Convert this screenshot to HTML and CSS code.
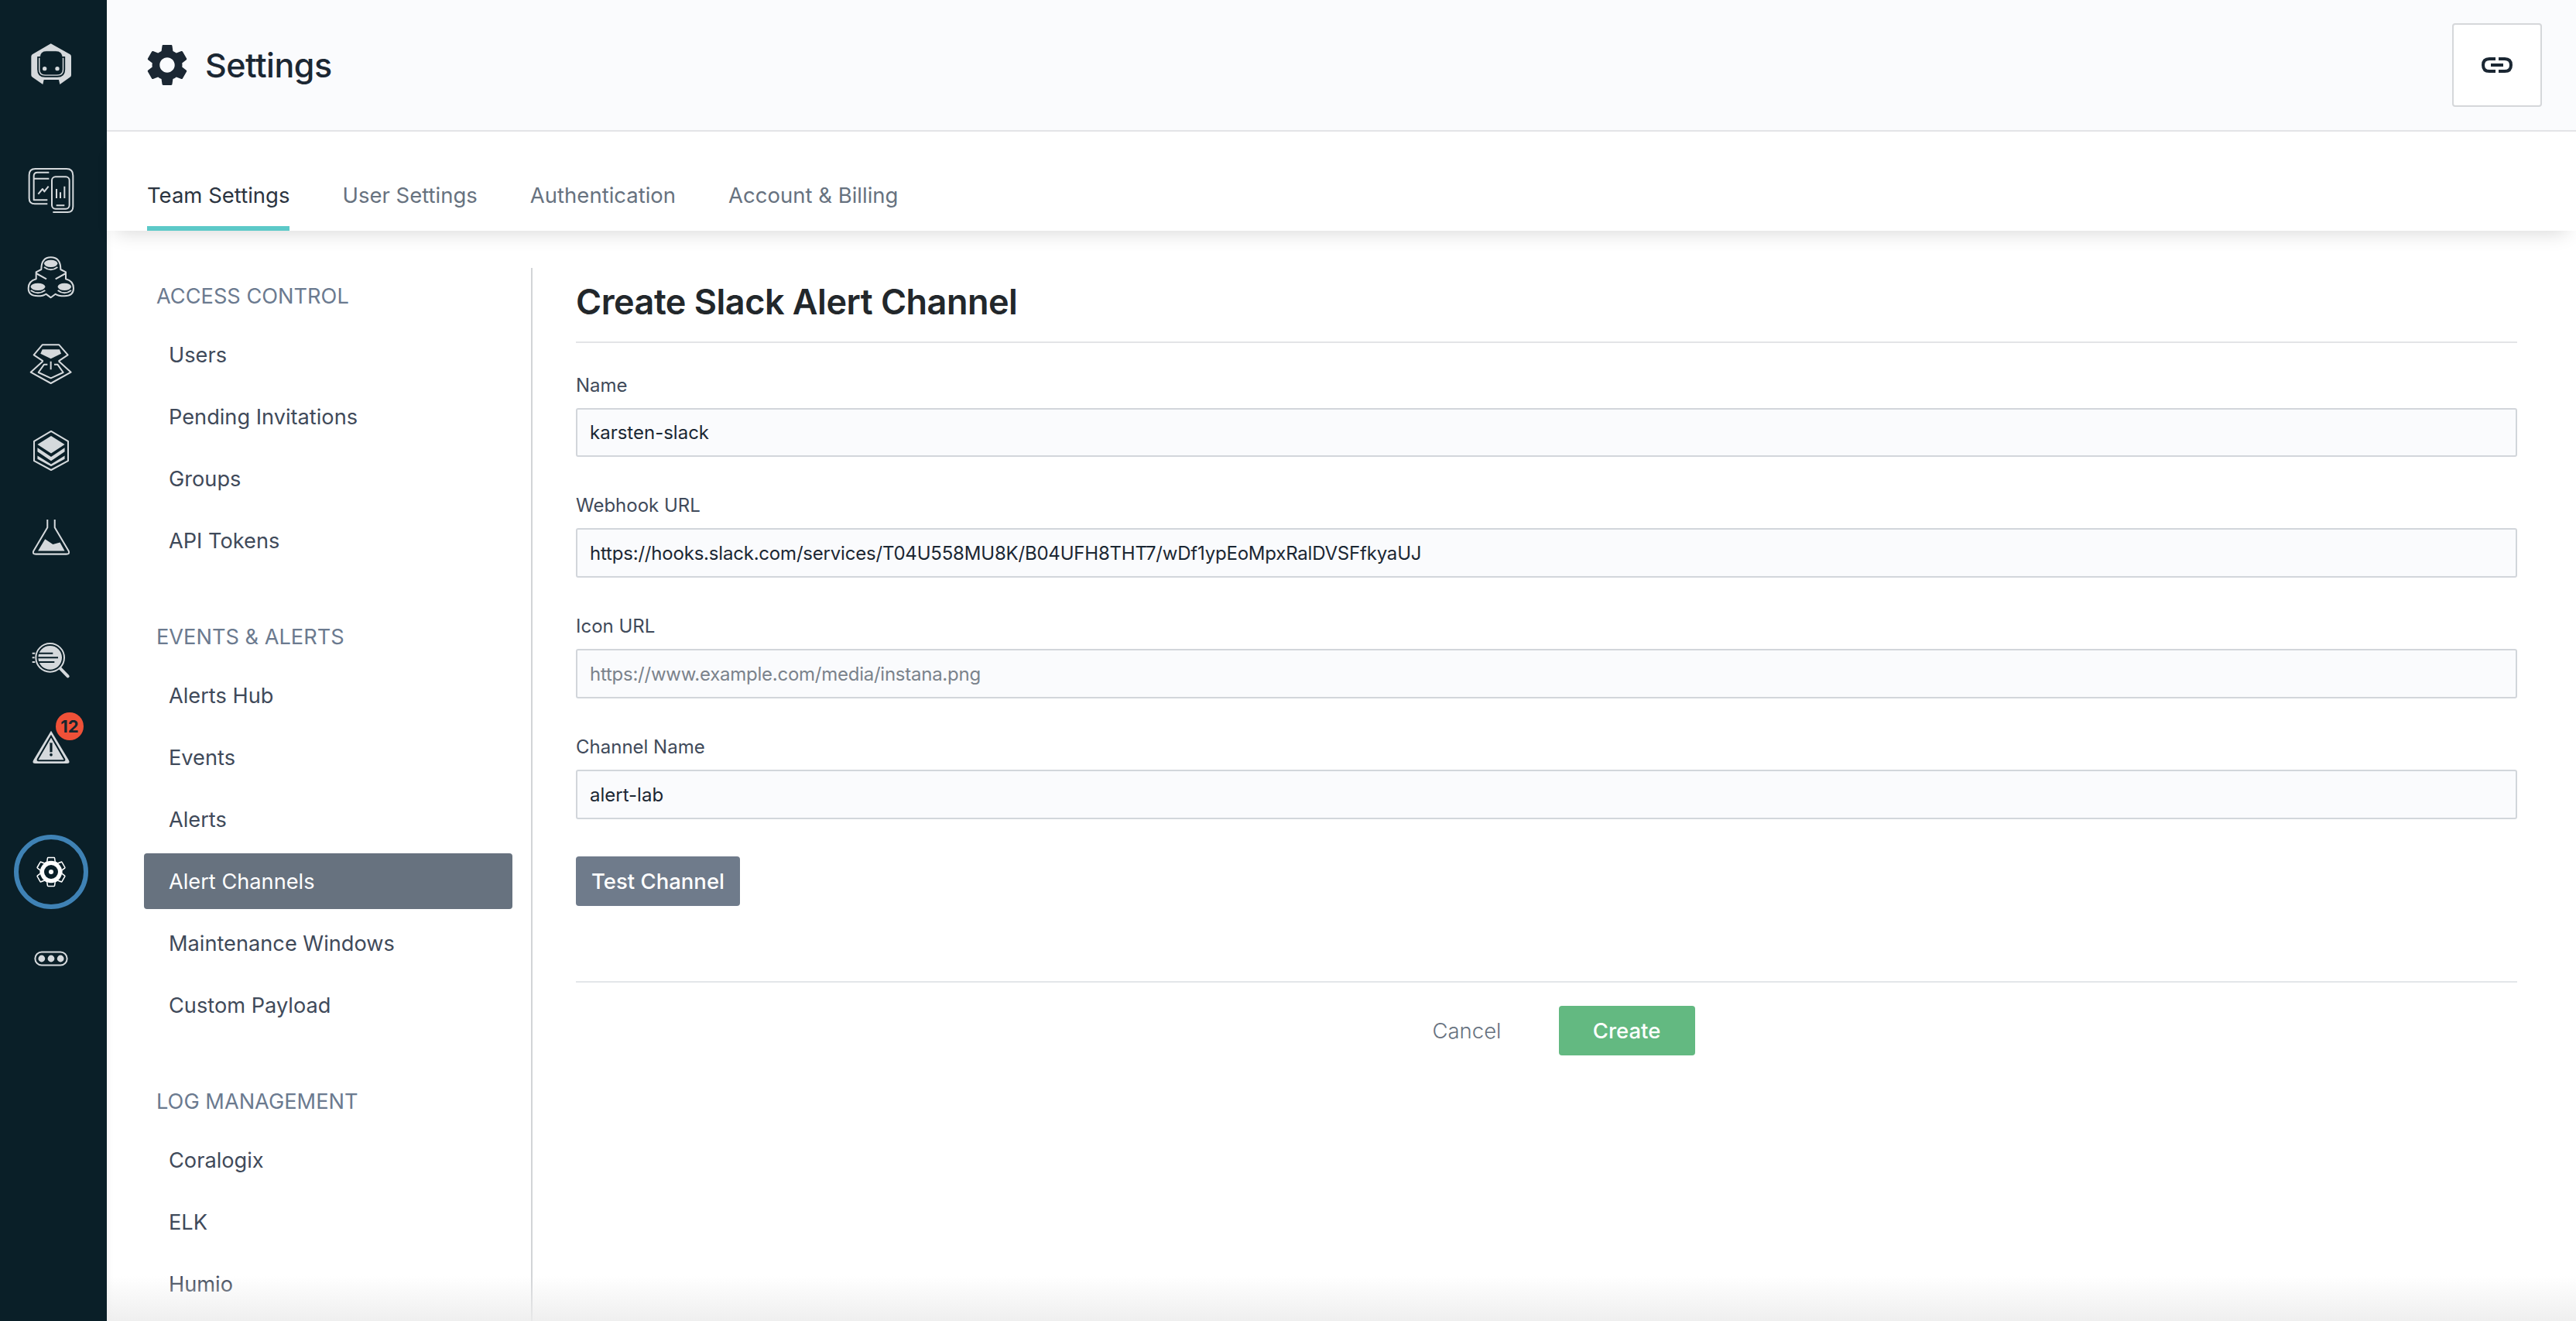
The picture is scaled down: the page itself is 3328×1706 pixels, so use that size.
FILE: index.html
```html
<!DOCTYPE html>
<html lang="en">
<head>
    <meta charset="UTF-8">
    <title>Settings</title>
    <link rel="stylesheet" href="styles.css">
</head>
<body>
<div class="app">
    <aside class="rail">
        <div class="rail-logo">
            <svg width="54" height="56" viewBox="117 166 162 168">
                <path class="solid" d="M197 170L272 212Q276 215 276 220V292Q276 298 270 301L232 328L228 310H170L166 328L127 301Q121 298 121 292V220Q121 215 125 212Z"/>
                <path class="cut" d="M147 220V270Q147 298 175 298H222Q250 298 250 270V220" fill="none" stroke-width="5"/>
                <path class="solid" d="M150 225V270Q150 294 175 294H222Q247 294 247 270V225Z"/>
                <path class="cut" d="M155 228Q155 200 180 200H216Q242 200 242 228V270Q242 290 220 290H177Q155 290 155 270Z"/>
                <circle class="solid" cx="173" cy="267" r="8"/>
                <circle class="solid" cx="222" cy="267" r="8"/>
            </svg>
        </div>
        <div class="rail-group">
            <div class="rail-slot">
                <svg width="62" height="62" viewBox="105 645 186 186">
                    <path class="line" d="M205 822H262Q283 822 283 800V680Q283 654 258 654H137Q113 654 113 678V768Q113 790 135 790H184"/>
                    <path class="line" d="M190 668H145Q131 668 131 682V775H184M131 692H190M148 752L165 732L172 742L188 722"/>
                    <rect class="line" x="201" y="685" width="68" height="124" rx="14"/>
                    <path class="line" d="M219 732V768M234 745V768M250 722V768M218 796H250"/>
                </svg>
            </div>
            <div class="rail-slot">
                <svg width="62" height="58" viewBox="105 982 186 166">
                    <path class="line" d="M160 1035Q160 988 197 988Q235 988 235 1035L255 1045V1072Q285 1080 285 1108Q285 1138 250 1138Q225 1138 215 1130L197 1144L178 1130Q168 1138 147 1138Q110 1138 110 1108Q110 1080 140 1072V1045Z"/>
                    <ellipse class="solid" cx="197" cy="1012" rx="26" ry="14"/>
                    <path class="line" d="M171 1026Q197 1046 223 1026M140 1050L180 1072M255 1050L215 1072"/>
                    <ellipse class="solid" cx="147" cy="1102" rx="28" ry="14"/>
                    <path class="line" d="M119 1116Q147 1136 175 1116"/>
                    <ellipse class="solid" cx="250" cy="1102" rx="26" ry="14"/>
                    <path class="line" d="M224 1116Q250 1136 276 1116"/>
                </svg>
            </div>
            <div class="rail-slot">
                <svg width="58" height="54" viewBox="112 130 174 160">
                    <path class="line" d="M168 199L132 175L165 136H230L264 175L228 199M168 199L120 242L198 285L276 242L228 199"/>
                    <path class="solid" d="M165 154H232L238 170L198 190L158 170Z"/>
                    <path class="line" d="M185 212H172L150 243L198 265L246 243L224 212H211M198 200V232"/>
                </svg>
            </div>
            <div class="rail-slot">
                <svg width="48" height="54" viewBox="127 467 142 158">
                    <path class="line" d="M198 472L263 510V585L198 620L133 585V510Z"/>
                    <path class="solid" d="M198 490L250 522L198 556L146 522Z"/>
                    <path class="solid" d="M146 535L198 570L250 535V550L198 585L146 550Z"/>
                    <path class="solid" d="M146 565L198 598L250 565V578L198 606L146 578Z"/>
                </svg>
            </div>
            <div class="rail-slot">
                <svg width="50" height="48" viewBox="124 808 148 140">
                    <path class="line" d="M184 810V840L131 930Q125 942 140 942H256Q271 942 265 930L212 840V810"/>
                    <path class="solid" d="M148 930L175 885L205 905L232 897L250 930Z"/>
                </svg>
            </div>
        </div>
        <div class="rail-group rail-tools">
            <div class="rail-slot">
                <svg width="50" height="48" viewBox="124 90 150 142">
                    <circle class="line" cx="195" cy="150" r="55"/>
                    <circle class="solid" cx="195" cy="150" r="46"/>
                    <path class="cut-line" d="M150 133H206M146 150H226M150 167H212"/>
                    <path class="line" d="M126 133H137M126 150H135M126 167H137"/>
                    <path class="line thick" d="M235 192L264 222"/>
                </svg>
            </div>
            <div class="rail-slot">
                <svg width="50" height="46" viewBox="124 424 148 132">
                    <path class="solid" d="M198 427L266 540Q272 552 258 552H138Q124 552 130 540Z"/>
                    <path class="cut-line" d="M198 448L147 536Q145 541 150 541H246Q251 541 249 536Z" fill="none"/>
                    <rect class="cut" x="194" y="474" width="8" height="34"/>
                    <circle class="cut" cx="198" cy="519" r="5"/>
                </svg>
                <span class="badge">12</span>
            </div>
        </div>
        <div class="rail-group rail-bottom">
            <div class="rail-slot">
                <div class="rail-active">
                    <svg width="46" height="46" viewBox="0 0 24 24">
                        <path class="gear-line" d="M19.14 12.94c.04-.3.06-.61.06-.94 0-.32-.02-.64-.07-.94l2.03-1.58c.18-.14.23-.41.12-.61l-1.92-3.32c-.12-.22-.37-.29-.59-.22l-2.39.96c-.5-.38-1.03-.7-1.62-.94l-.36-2.54c-.04-.24-.24-.41-.48-.41h-3.84c-.24 0-.43.17-.47.41l-.36 2.54c-.59.24-1.13.57-1.62.94l-2.39-.96c-.22-.08-.47 0-.59.22L2.74 8.87c-.12.21-.08.47.12.61l2.03 1.58c-.05.3-.09.63-.09.94s.02.64.07.94l-2.03 1.58c-.18.14-.23.41-.12.61l1.92 3.32c.12.22.37.29.59.22l2.39-.96c.5.38 1.03.7 1.62.94l.36 2.54c.05.24.24.41.48.41h3.84c.24 0 .44-.17.47-.41l.36-2.54c.59-.24 1.13-.56 1.62-.94l2.39.96c.22.08.47 0 .59-.22l1.92-3.32c.12-.22.07-.47-.12-.61l-2.01-1.58z"/>
                        <circle class="white" cx="12" cy="12" r="7.4"/>
                        <circle class="cut" cx="12" cy="12" r="4.2"/>
                        <circle class="white" cx="12" cy="12" r="1.6"/>
                    </svg>
                </div>
            </div>
            <div class="rail-slot">
                <svg width="44" height="20" viewBox="133 1285 130 58">
                    <rect class="line" x="137" y="1289" width="122" height="50" rx="25"/>
                    <circle class="solid" cx="162" cy="1314" r="13"/>
                    <circle class="solid" cx="198" cy="1314" r="13"/>
                    <circle class="solid" cx="234" cy="1314" r="13"/>
                </svg>
            </div>
        </div>
    </aside>

    <div class="main">
        <header class="page-header">
            <div class="page-title">
                <svg class="title-gear" width="52" height="54" viewBox="2.6 2 18.8 20">
                    <path d="M19.14 12.94c.04-.3.06-.61.06-.94 0-.32-.02-.64-.07-.94l2.03-1.58c.18-.14.23-.41.12-.61l-1.92-3.32c-.12-.22-.37-.29-.59-.22l-2.39.96c-.5-.38-1.03-.7-1.62-.94l-.36-2.54c-.04-.24-.24-.41-.48-.41h-3.84c-.24 0-.43.17-.47.41l-.36 2.54c-.59.24-1.13.57-1.62.94l-2.39-.96c-.22-.08-.47 0-.59.22L2.74 8.87c-.12.21-.08.47.12.61l2.03 1.58c-.05.3-.09.63-.09.94s.02.64.07.94l-2.03 1.58c-.18.14-.23.41-.12.61l1.92 3.32c.12.22.37.29.59.22l2.39-.96c.5.38 1.03.7 1.62.94l.36 2.54c.05.24.24.41.48.41h3.84c.24 0 .44-.17.47-.41l.36-2.54c.59-.24 1.13-.56 1.62-.94l2.39.96c.22.08.47 0 .59-.22l1.92-3.32c.12-.22.07-.47-.12-.61l-2.01-1.58zM12 15.6c-1.98 0-3.6-1.62-3.6-3.6s1.62-3.6 3.6-3.6 3.6 1.62 3.6 3.6-1.62 3.6-3.6 3.6z"/>
                </svg>
                <h1>Settings</h1>
            </div>
            <button class="link-button" type="button">
                <svg width="40" height="20" viewBox="0 0 40 20">
                    <path d="M18 2H10Q2 2 2 10Q2 18 10 18H18M22 2H30Q38 2 38 10Q38 18 30 18H22M12 10H28" fill="none" stroke="#1b2733" stroke-width="4"/>
                </svg>
            </button>
        </header>

        <nav class="tabs">
            <a class="tab tab-active">Team Settings</a>
            <a class="tab">User Settings</a>
            <a class="tab">Authentication</a>
            <a class="tab">Account &amp; Billing</a>
        </nav>

        <div class="settings">
            <div class="side-menu">
                <div class="menu-group">
                    <h4>ACCESS CONTROL</h4>
                    <a class="menu-item">Users</a>
                    <a class="menu-item">Pending Invitations</a>
                    <a class="menu-item">Groups</a>
                    <a class="menu-item">API Tokens</a>
                </div>
                <div class="menu-group">
                    <h4>EVENTS &amp; ALERTS</h4>
                    <a class="menu-item">Alerts Hub</a>
                    <a class="menu-item">Events</a>
                    <a class="menu-item">Alerts</a>
                    <a class="menu-item menu-active">Alert Channels</a>
                    <a class="menu-item">Maintenance Windows</a>
                    <a class="menu-item">Custom Payload</a>
                </div>
                <div class="menu-group">
                    <h4>LOG MANAGEMENT</h4>
                    <a class="menu-item">Coralogix</a>
                    <a class="menu-item">ELK</a>
                    <a class="menu-item">Humio</a>
                </div>
            </div>

            <form class="channel-form">
                <h2>Create Slack Alert Channel</h2>
                <div class="field">
                    <label>Name</label>
                    <input type="text" value="karsten-slack">
                </div>
                <div class="field">
                    <label>Webhook URL</label>
                    <input class="input-url" type="text" value="https://hooks.slack.com/services/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">
                </div>
                <div class="field">
                    <label>Icon URL</label>
                    <input type="text" placeholder="https://www.example.com/media/instana.png">
                </div>
                <div class="field">
                    <label>Channel Name</label>
                    <input type="text" value="alert-lab">
                </div>
                <button class="btn btn-test" type="button">Test Channel</button>
                <div class="form-actions">
                    <button class="btn btn-cancel" type="button">Cancel</button>
                    <button class="btn btn-create" type="button">Create</button>
                </div>
            </form>
        </div>
        <div class="bottom-fade"></div>
    </div>
</div>
</body>
</html>
```

FILE: styles.css
```css
* {
    box-sizing: border-box;
}

body {
    margin: 0;
    font-family: Inter, "Noto Sans", sans-serif;
    color: #3f4a5a;
    background-color: #fff;
}

.app {
    display: flex;
    height: 100vh;
    overflow: hidden;
}

/* left rail */
.rail {
    width: 138px;
    flex-shrink: 0;
    display: flex;
    flex-direction: column;
    padding-right: 6px;
    background-color: #0a1f28;
}

.rail-logo {
    height: 166px;
    display: flex;
    align-items: center;
    justify-content: center;
}

.rail-group {
    margin-top: 24px;
}

.rail-tools {
    margin-top: 47px;
}

.rail-bottom {
    margin-top: 49px;
}

.rail-slot {
    position: relative;
    height: 112px;
    display: flex;
    align-items: center;
    justify-content: center;
}

.rail-active {
    width: 96px;
    height: 96px;
    border: 6px solid #3f82b5;
    border-radius: 50%;
    display: flex;
    align-items: center;
    justify-content: center;
}

.solid { fill: #d5d9dc; }
.white { fill: #fff; }
.cut { fill: #0a1f28; stroke: #0a1f28; }
.line { fill: none; stroke: #d5d9dc; stroke-width: 6; stroke-linejoin: round; }
.thick { stroke-width: 12; stroke-linecap: round; }
.cut-line { stroke: #0a1f28; stroke-width: 6; }
.gear-line { fill: none; stroke: #fff; stroke-width: 0.8; }

.badge {
    position: absolute;
    top: 11px;
    left: 72px;
    width: 36px;
    height: 36px;
    border-radius: 50%;
    background-color: #ef5138;
    color: #16262e;
    font-size: 22px;
    font-weight: 700;
    line-height: 36px;
    text-align: center;
}

/* header */
.main {
    position: relative;
    flex: 1;
    display: flex;
    flex-direction: column;
    min-width: 0;
    box-shadow: inset 10px 0 10px -10px rgba(0, 0, 0, 0.08);
}

.page-header {
    height: 170px;
    flex-shrink: 0;
    display: flex;
    align-items: center;
    justify-content: space-between;
    padding: 0 44px 0 52px;
    background-color: #fafbfd;
    border-bottom: 2px solid #e3e4e7;
}

.page-title {
    display: flex;
    align-items: center;
    gap: 23px;
}

.title-gear {
    fill: #1b2733;
}

h1 {
    margin: 0;
    font-size: 43px;
    font-weight: 500;
    letter-spacing: -0.5px;
    color: #1b2733;
}

.link-button {
    width: 116px;
    height: 108px;
    display: flex;
    align-items: center;
    justify-content: center;
    padding: 0;
    background-color: #fff;
    border: 2px solid #d5d7da;
    border-radius: 4px;
}

/* tabs */
.tabs {
    position: relative;
    height: 128px;
    flex-shrink: 0;
    display: flex;
    align-items: flex-end;
    gap: 68px;
    padding-left: 52px;
    background-color: #fff;
    box-shadow: 0 14px 24px -12px rgba(0, 0, 0, 0.16);
}

.tab {
    height: 86px;
    font-size: 27.5px;
    line-height: 80px;
    color: #67727f;
}

.tab-active {
    color: #2b3440;
    border-bottom: 6px solid #5cc9c8;
}

/* settings body */
.settings {
    flex: 1;
    display: flex;
    min-height: 0;
    margin-top: 48px;
}

.side-menu {
    width: 550px;
    flex-shrink: 0;
    padding: 16px 24px 0 48px;
    border-right: 2px solid #d2d4d7;
}

.menu-group {
    margin-bottom: 68px;
}

h4 {
    height: 40px;
    margin: 0 0 20px 16px;
    font-size: 27.2px;
    font-weight: 400;
    line-height: 42px;
    color: #6b7a8f;
}

.menu-item {
    display: block;
    height: 72px;
    margin-top: 8px;
    padding-left: 32px;
    font-size: 27.2px;
    line-height: 74px;
    color: #3f4a5a;
}

.menu-active {
    background-color: #67727f;
    border-radius: 4px;
    color: #fff;
}

/* form */
.channel-form {
    flex: 1;
    padding: 16px 76px 0 56px;
}

h2 {
    margin: 0;
    padding-bottom: 23px;
    font-size: 45px;
    font-weight: 600;
    letter-spacing: -0.5px;
    line-height: 56px;
    color: #22272b;
    border-bottom: 2px solid #e3e4e7;
}

.field {
    margin-top: 46px;
}

h2 + .field {
    margin-top: 38px;
}

h2 + .field input {
    height: 63px;
}

label {
    display: block;
    margin-bottom: 12px;
    font-size: 24px;
    line-height: 34px;
    color: #3f4a5a;
}

input {
    display: block;
    width: 100%;
    height: 64px;
    padding: 0 16px;
    font-family: inherit;
    font-size: 24px;
    color: #1b2733;
    background-color: #fafbfd;
    border: 2px solid #d2d6db;
    border-radius: 3px;
}

.input-url {
    letter-spacing: -0.2px;
}

input::placeholder {
    color: #7b838c;
    letter-spacing: -0.25px;
}

.btn {
    height: 64px;
    font-family: inherit;
    font-size: 27.5px;
    border: none;
    border-radius: 4px;
}

.btn-test {
    display: block;
    width: 212px;
    margin-top: 48px;
    font-weight: 500;
    color: #fff;
    background-color: #6f7b8b;
}

.form-actions {
    display: flex;
    justify-content: center;
    margin-top: 97px;
    padding-top: 30px;
    border-top: 2px solid #e3e6e9;
}

.btn-cancel {
    padding: 0 47px 0 44px;
    margin-right: 27px;
    font-weight: 300;
    color: #67727f;
    background-color: transparent;
}

.btn-create {
    width: 176px;
    color: #fff;
    font-weight: 500;
    background-color: #63b981;
}

.bottom-fade {
    position: absolute;
    left: 0;
    right: 0;
    bottom: 0;
    height: 58px;
    background: linear-gradient(to bottom, rgba(240, 240, 240, 0), rgba(236, 236, 236, 0.85));
}
```
